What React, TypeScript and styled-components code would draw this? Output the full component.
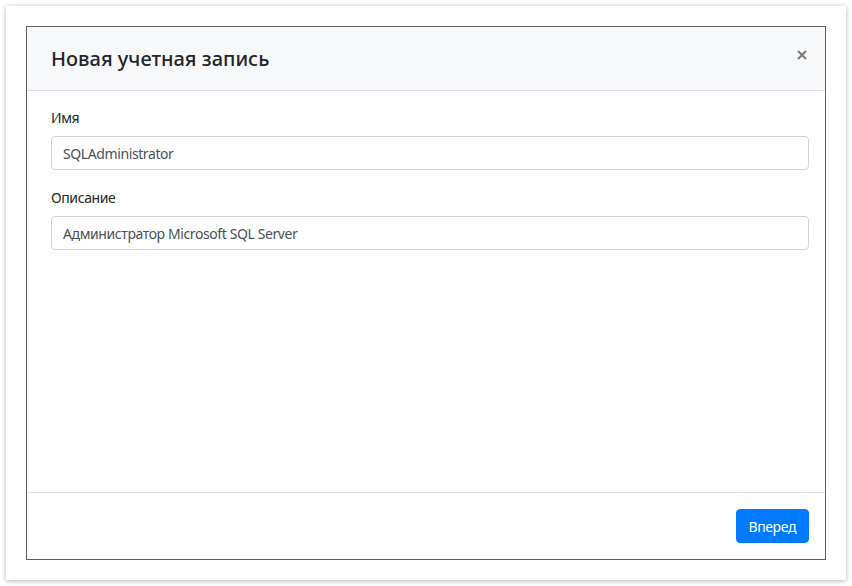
import styled, { createGlobalStyle } from "styled-components";

const GlobalStyle = createGlobalStyle`
  html, body {
    margin: 0;
    padding: 0;
    background: #ffffff;
  }
  body {
    font-family: "Noto Sans", "Open Sans", sans-serif;
    color: #212529;
  }
`;

export default function App() {
  return (
    <>
      <GlobalStyle />
      <Page>
        <Frame>
          <Modal>
            <Header>
              <Title>Новая учетная запись</Title>
              <CloseButton aria-label="Закрыть">
                <svg width="10" height="10" viewBox="0 0 10 10">
                  <path
                    d="M1 1L9 9M9 1L1 9"
                    stroke="currentColor"
                    strokeWidth="2"
                    strokeLinecap="butt"
                  />
                </svg>
              </CloseButton>
            </Header>
            <Body>
              <Field>
                <Label>Имя</Label>
                <Input defaultValue="SQLAdministrator" />
              </Field>
              <Field>
                <Label>Описание</Label>
                <Input defaultValue="Администратор Microsoft SQL Server" />
              </Field>
            </Body>
            <Footer>
              <PrimaryButton>Вперед</PrimaryButton>
            </Footer>
          </Modal>
        </Frame>
      </Page>
    </>
  );
}

const Page = styled.div`
  width: 852px;
  height: 586px;
  padding: 6px;
  box-sizing: border-box;
`;

const Frame = styled.div`
  width: 840px;
  height: 574px;
  box-sizing: border-box;
  padding: 20px;
  background: #ffffff;
  box-shadow: 0 1px 5px rgba(0, 0, 0, 0.3);
`;

const Modal = styled.div`
  display: flex;
  flex-direction: column;
  height: 100%;
  box-sizing: border-box;
  border: 1px solid #5f5f5f;
  background: #ffffff;
`;

const Header = styled.div`
  display: flex;
  align-items: center;
  justify-content: space-between;
  height: 64px;
  box-sizing: border-box;
  padding: 0 18px 0 24px;
  background: #f7f8fa;
  border-bottom: 1px solid #dee2e6;
`;

const Title = styled.h5`
  margin: 0;
  font-size: 20px;
  font-weight: 500;
  color: #212529;
`;

const CloseButton = styled.button`
  display: flex;
  align-self: flex-start;
  margin-top: 23px;
  border: 0;
  background: transparent;
  padding: 0;
  color: #7a7a7a;
`;

const Body = styled.div`
  flex: 1;
  display: flex;
  flex-direction: column;
  gap: 18px;
  padding: 17px 16px 0 24px;
`;

const Field = styled.div`
  display: flex;
  flex-direction: column;
  gap: 8px;
`;

const Label = styled.label`
  font-size: 14px;
  line-height: 20px;
  letter-spacing: -0.4px;
  color: #212529;
`;

const Input = styled.input`
  height: 34px;
  box-sizing: border-box;
  padding: 0 11px;
  border: 1px solid #ced4da;
  border-radius: 4px;
  font-family: "Noto Sans", "Open Sans", sans-serif;
  font-size: 14px;
  letter-spacing: -0.4px;
  color: #495057;
  outline: none;
`;

const Footer = styled.div`
  display: flex;
  justify-content: flex-end;
  align-items: center;
  padding: 16px;
  border-top: 1px solid #dee2e6;
`;

const PrimaryButton = styled.button`
  height: 34px;
  padding: 0 12px;
  border: 1px solid #007bff;
  border-radius: 4px;
  background: #007bff;
  color: #ffffff;
  font-family: "Noto Sans", "Open Sans", sans-serif;
  font-size: 14px;
  letter-spacing: -0.4px;
`;
